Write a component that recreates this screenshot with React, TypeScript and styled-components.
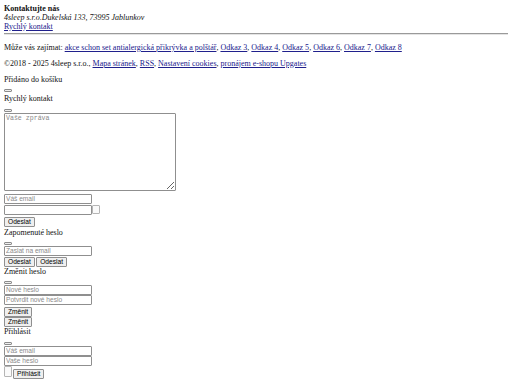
import React from "react";
import styled, { createGlobalStyle } from "styled-components";

const Global = createGlobalStyle`
  html, body { background: #fff; }
  body {
    margin: 4px;
    font-family: "Liberation Serif", "Times New Roman", serif;
    font-size: 8px;
    line-height: 9px;
    color: #111;
  }
  a { color: #20208c; text-decoration: underline; }
`;

const Page = styled.div`
  display: flex;
  flex-direction: column;
  align-items: flex-start;
`;

const Contact = styled.div`
  display: flex;
  flex-direction: column;
  align-items: flex-start;
  margin-top: -0.5px;
`;

const Strong = styled.strong`
  font-weight: bold;
`;

const Address = styled.em`
  font-style: italic;
`;

const Rule = styled.hr`
  align-self: stretch;
  margin: 2.5px 0 0;
  border: none;
  border-top: 1px solid #9a9a9a;
  border-bottom: 1px solid #e4e4e4;
  height: 0;
`;

const Para = styled.p<{ $top: number }>`
  margin: ${(p) => p.$top}px 0 0;
  line-height: 9px;
`;

const Title = styled.div<{ $top?: number }>`
  margin-top: ${(p) => p.$top ?? 0}px;
  line-height: 9px;
`;

const CloseBtn = styled.button<{ $top?: number }>`
  display: block;
  width: 8px;
  height: 3px;
  margin: ${(p) => p.$top ?? 5}px 0 0;
  padding: 0;
  border: 1px solid #8c8c8c;
  border-radius: 1px;
  background: #efefef;
`;

const Area = styled.textarea`
  display: block;
  box-sizing: border-box;
  width: 172px;
  height: 78px;
  margin: 1px 0 0;
  padding: 1px;
  border: 1px solid #8f8f8f;
  border-radius: 1px;
  font-family: "Liberation Mono", monospace;
  font-size: 6.6px;
  resize: vertical;
  &::placeholder { color: #8a8a8a; }
`;

const Field = styled.input<{ $top?: number }>`
  display: block;
  box-sizing: border-box;
  width: 88px;
  height: 10px;
  margin: ${(p) => p.$top ?? 0}px 0 0;
  padding: 0 1px;
  border: 1px solid #8f8f8f;
  border-radius: 1px;
  font-family: "Liberation Sans", Arial, sans-serif;
  font-size: 6.6px;
  &::placeholder { color: #8a8a8a; }
`;

const Row = styled.div<{ $top?: number; $gap?: number }>`
  display: flex;
  align-items: flex-start;
  gap: ${(p) => p.$gap ?? 0}px;
  margin-top: ${(p) => p.$top ?? 0}px;
`;

const Box = styled.span<{ $h?: number }>`
  display: block;
  box-sizing: border-box;
  width: 8px;
  height: ${(p) => p.$h ?? 9}px;
  border: 1px solid #b5b5b5;
  border-radius: 1px;
  background: #fafafa;
`;

const Btn = styled.button<{ $top?: number }>`
  display: block;
  box-sizing: border-box;
  height: 10px;
  margin: ${(p) => p.$top ?? 0}px 0 0;
  padding: 0 3px;
  border: 1px solid #8f8f8f;
  border-radius: 1px;
  background: #efefef;
  font-family: "Liberation Sans", Arial, sans-serif;
  font-size: 6.6px;
  line-height: 8px;
  color: #000;
`;

export default function App() {
  return (
    <>
      <Global />
      <Page>
        <Contact>
          <Strong>Kontaktujte nás</Strong>
          <Address>4sleep s.r.o.Dukelská 133, 73995 Jablunkov</Address>
          <a href="#">Rychlý kontakt</a>
        </Contact>
        <Rule />
        <Para $top={7.5}>
          Může vás zajímat: <a href="#">akce schon set antialergická přikrývka a polštář</a>,{" "}
          <a href="#">Odkaz 3</a>, <a href="#">Odkaz 4</a>, <a href="#">Odkaz 5</a>,{" "}
          <a href="#">Odkaz 6</a>, <a href="#">Odkaz 7</a>, <a href="#">Odkaz 8</a>
        </Para>
        <Para $top={7}>
          ©2018 - 2025 4sleep s.r.o., <a href="#">Mapa stránek</a>, <a href="#">RSS</a>,{" "}
          <a href="#">Nastavení cookies</a>, <a href="#">pronájem e-shopu Upgates</a>
        </Para>
        <Para $top={7.5}>Přidáno do košíku</Para>
        <CloseBtn $top={5} aria-label="zavřít" />
        <Title $top={2}>Rychlý kontakt</Title>
        <CloseBtn $top={5.5} aria-label="zavřít" />
        <Area placeholder="Vaše zpráva" />
        <Field $top={3} placeholder="Váš email" />
        <Row $top={1}>
          <Field />
          <Box />
        </Row>
        <Btn $top={2}>Odeslat</Btn>
        <Title $top={1.5}>Zapomenuté heslo</Title>
        <CloseBtn $top={4.5} aria-label="zavřít" />
        <Field $top={1} placeholder="Zaslat na email" />
        <Row $top={1} $gap={1.5}>
          <Btn>Odeslat</Btn>
          <Btn>Odeslat</Btn>
        </Row>
        <Title>Změnit heslo</Title>
        <CloseBtn $top={5} aria-label="zavřít" />
        <Field $top={1} placeholder="Nové heslo" />
        <Field placeholder="Potvrdit nové heslo" />
        <Btn $top={2}>Změnit</Btn>
        <Btn>Změnit</Btn>
        <Title $top={0.5}>Přihlásit</Title>
        <CloseBtn $top={5.5} aria-label="zavřít" />
        <Field $top={1} placeholder="Váš email" />
        <Field placeholder="Vaše heslo" />
        <Row $gap={1}>
          <Box $h={11} />
          <Btn $top={3}>Přihlásit</Btn>
        </Row>
      </Page>
    </>
  );
}
